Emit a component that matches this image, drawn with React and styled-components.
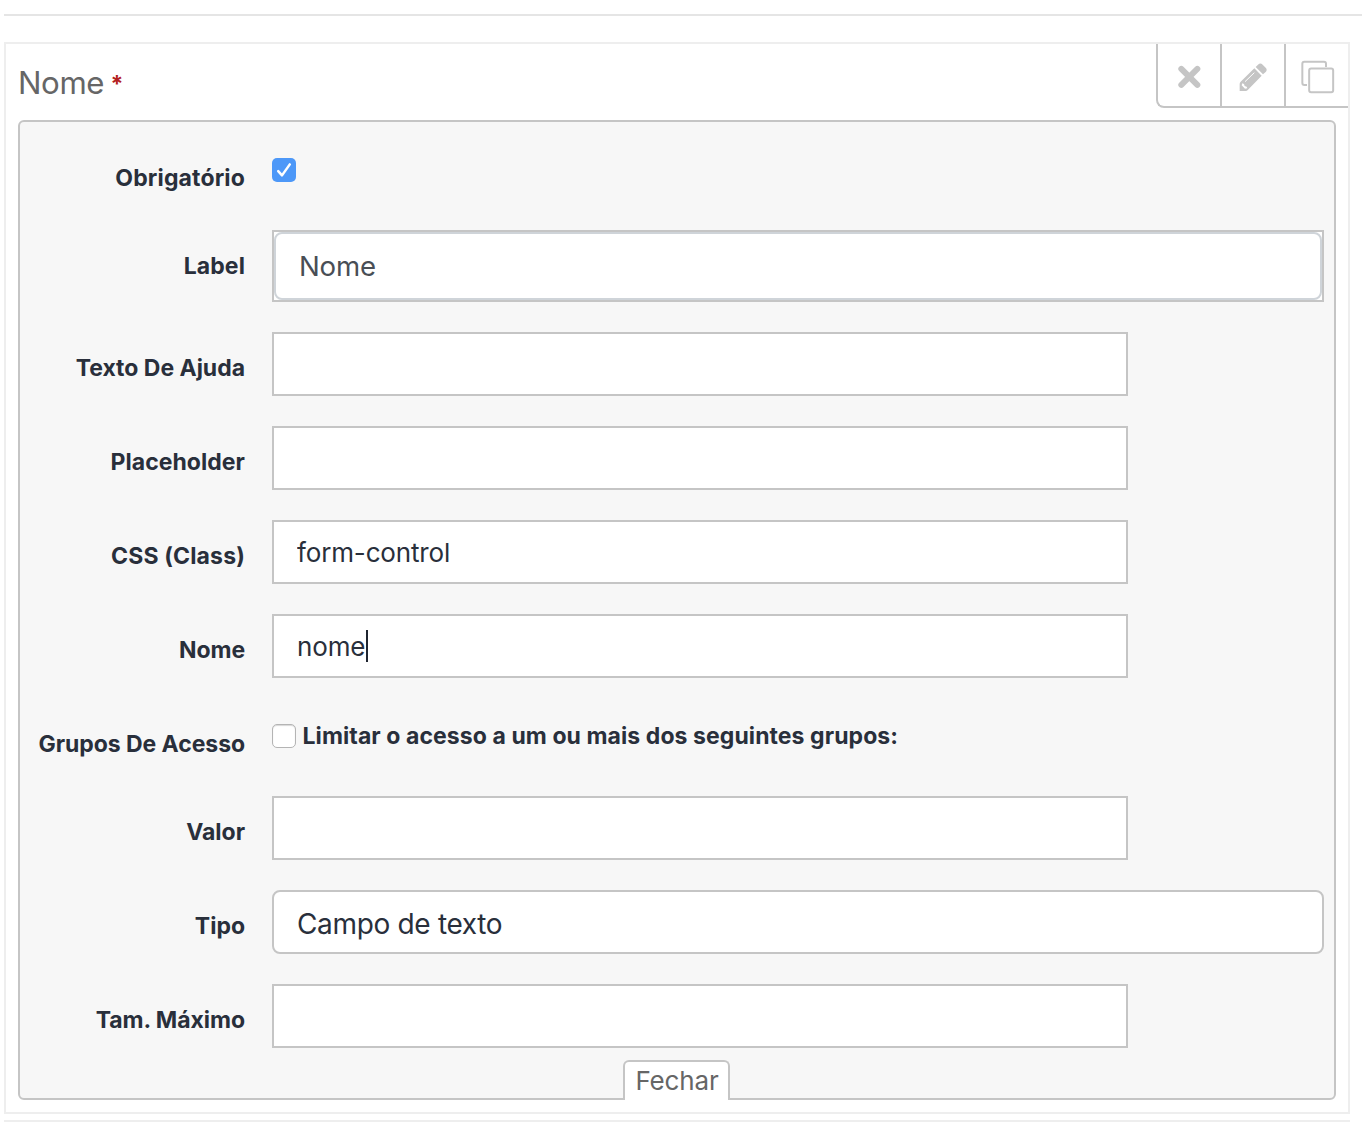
import React from "react";
import styled, { createGlobalStyle } from "styled-components";

const line = "#c5c5c5";

const GlobalStyle = createGlobalStyle`
  *, *::before, *::after { box-sizing: border-box; }
  body {
    margin: 0;
    background: #fff;
    color: #292b2c;
    font-family: Inter, "Liberation Sans", sans-serif;
    overflow: hidden;
  }
`;

const Page = styled.main`
  display: flex;
  flex-direction: column;
  height: 1122px;
  padding: 14px 0 0 4px;
`;

const Divider = styled.hr`
  flex: none;
  width: 100%;
  height: 2px;
  margin: 0 0 26px;
  border: 0;
  background: #e5e5e5;
`;

const FieldCard = styled.section`
  flex: none;
  display: flex;
  flex-direction: column;
  width: 1346px;
  height: 1072px;
  margin-bottom: 6px;
  padding: 0 12px;
  border: 2px solid #eee;
`;

const NextCard = styled.section`
  flex: none;
  width: 1346px;
  height: 2px;
  background: #eee;
`;

const CardHeader = styled.header`
  display: flex;
  justify-content: space-between;
  height: 76px;
  margin-right: -12px;
`;

const Title = styled.h1`
  display: flex;
  margin: 0;
  padding-top: 19px;
  color: #666;
  font-size: 31.2px;
  font-weight: 400;
  letter-spacing: -0.4px;
  line-height: 40px;
`;

const Required = styled.span`
  margin-left: 6.5px;
  color: #b32020;
  font-size: 23px;
  font-weight: 700;
  line-height: 42px;
`;

const Toolbar = styled.div`
  display: flex;
  height: 64px;
  border: solid ${line};
  border-width: 0 0 2px 2px;
  border-bottom-left-radius: 8px;
`;

const ToolButton = styled.button`
  display: grid;
  place-items: center;
  width: ${(p) => (p.$first ? 62 : 64)}px;
  height: 62px;
  padding: 0;
  border: 0;
  border-left: ${(p) => (p.$first ? "0" : `2px solid ${line}`)};
  background: none;
  color: ${line};

  svg { display: block; width: 40px; height: 40px; }
`;

const Panel = styled.form`
  display: flex;
  flex-direction: column;
  gap: 30px;
  height: 980px;
  padding: 20px 10px 0 0;
  border: 2px solid ${line};
  border-radius: 6px;
  background: #f7f7f7;
`;

const Row = styled.div`
  flex: none;
  display: grid;
  grid-template-columns: 225px 1052px;
  column-gap: 27px;
  height: ${(p) => p.$height || 64}px;
`;

const Label = styled.label`
  padding-top: 22px;
  color: #292f3b;
  font-size: 23px;
  font-weight: 700;
  line-height: 28px;
  letter-spacing: ${(p) => p.$tracking || 0}px;
  text-align: right;
  white-space: nowrap;
`;

const FieldBox = styled.div`
  position: relative;
  width: 856px;
  height: 64px;
`;

const TextInput = styled.input`
  display: block;
  width: 100%;
  height: 100%;
  padding: 0 23px;
  border: 2px solid ${line};
  border-radius: 0;
  outline: 0;
  background: #fff;
  color: #292f3b;
  font-family: inherit;
  font-size: 26px;
  letter-spacing: -0.15px;
`;

const Caret = styled.span`
  position: absolute;
  top: 16px;
  left: 94px;
  width: 2px;
  height: 32px;
  background: #1f2530;
`;

const EditableFrame = styled.div`
  height: 72px;
  border: 2px solid ${line};
  background: #fff;
`;

const Editable = styled.div`
  height: 68px;
  padding: 0 23px;
  border: 2px solid #cfd4d9;
  border-radius: 8px;
  color: #494e55;
  font-size: 27.6px;
  letter-spacing: -0.2px;
  line-height: 65px;
`;

const Select = styled.select`
  width: 100%;
  height: 64px;
  padding: 4px 23px 0;
  border: 2px solid ${line};
  border-radius: 8px;
  appearance: none;
  background: #fff;
  color: #292f3b;
  font-family: inherit;
  font-size: 28px;
  letter-spacing: -0.33px;
`;

const CheckLine = styled.div`
  display: flex;
  align-items: center;
  height: 24px;
  margin-top: 16px;
`;

const Checkbox = styled.span`
  flex: none;
  width: 24px;
  height: 24px;
  border: ${(p) => (p.$checked ? "0" : "1px solid #b4b4b4")};
  border-radius: 5px;
  background: ${(p) => (p.$checked ? "#4d98f8" : "#fff")};
  box-shadow: ${(p) => (p.$checked ? "none" : "inset 0 1px 1px #d8d8d8")};

  svg { display: block; width: 24px; height: 24px; }
`;

const CheckText = styled.span`
  margin-left: 6.5px;
  color: #292f3b;
  font-size: 23px;
  font-weight: 700;
  letter-spacing: 0.08px;
  line-height: 24px;
`;

const CloseTab = styled.button`
  align-self: center;
  flex: none;
  width: 107px;
  height: 40px;
  margin: -18px -9px 0 0;
  padding: 0 0 0 1px;
  border: 2px solid ${line};
  border-bottom: 0;
  border-radius: 6px 6px 0 0;
  background: #fff;
  color: #666;
  font-family: inherit;
  font-size: 26px;
  letter-spacing: -0.15px;
  line-height: 38px;
`;

const RemoveIcon = () => (
  <svg viewBox="81 165 120 120" aria-hidden="true">
    <path d="M118 206.500 L166 254.500 M166 206.500 L118 254.500" fill="none" stroke="currentColor" strokeWidth="18" strokeLinecap="round" />
  </svg>
);

const EditIcon = () => (
  <svg viewBox="273 165 120 120" aria-hidden="true">
    <path fill="currentColor" d="M348 194 Q355 187 362 194 L371 203 Q377 209 371 216 L363 223 L341 201 Z" />
    <path fill="currentColor" d="M337 205 L359 227 L318 269 Q315 273 311 273 L293 273 L293 252 Q293 248 296 245 Z" />
    <path fill="none" stroke="#fff" strokeWidth="3" d="M309 245 L337 218" />
    <path fill="#fff" d="M299 256 L301 250 L306 252 L308 258 L314 260 L316 265 L309 266 L304 261 Z" />
  </svg>
);

const CopyIcon = () => (
  <svg viewBox="465 165 120 120" aria-hidden="true">
    <g fill="none" stroke="currentColor" strokeWidth="6">
      <path d="M552 201 V191 Q552 185 546 185 H487 Q481 185 481 191 V249 Q481 255 487 255 H495" />
      <rect x="501.500" y="205.500" width="72" height="71" rx="6" />
    </g>
  </svg>
);

const CheckIcon = () => (
  <svg viewBox="0 0 24 24" aria-hidden="true">
    <path d="M6.200 13.200 L10 17.400 L17.800 6.400" fill="none" stroke="#fff" strokeWidth="2.500" strokeLinecap="round" strokeLinejoin="round" />
  </svg>
);

function TextField({ label, tracking, value = "", focused }) {
  return (
    <Row>
      <Label $tracking={tracking}>{label}</Label>
      <FieldBox>
        <TextInput aria-label={label} defaultValue={value} />
        {focused && <Caret />}
      </FieldBox>
    </Row>
  );
}

export default function App() {
  return (
    <>
      <GlobalStyle />
      <Page>
        <Divider />
        <FieldCard>
          <CardHeader>
            <Title>
              Nome<Required>*</Required>
            </Title>
            <Toolbar>
              <ToolButton $first type="button" aria-label="Remover"><RemoveIcon /></ToolButton>
              <ToolButton type="button" aria-label="Editar"><EditIcon /></ToolButton>
              <ToolButton type="button" aria-label="Copiar"><CopyIcon /></ToolButton>
            </Toolbar>
          </CardHeader>
          <Panel>
            <Row $height={58}>
              <Label $tracking={0.15}>Obrigatório</Label>
              <CheckLine>
                <Checkbox $checked><CheckIcon /></Checkbox>
              </CheckLine>
            </Row>
            <Row $height={72}>
              <Label $tracking={0.1}>Label</Label>
              <EditableFrame><Editable>Nome</Editable></EditableFrame>
            </Row>
            <TextField label="Texto De Ajuda" tracking={-0.02} />
            <TextField label="Placeholder" tracking={0.05} />
            <TextField label="CSS (Class)" tracking={0.15} value="form-control" />
            <TextField label="Nome" tracking={-0.1} value="nome" focused />
            <Row $height={58}>
              <Label $tracking={-0.06}>Grupos De Acesso</Label>
              <CheckLine>
                <Checkbox />
                <CheckText>Limitar o acesso a um ou mais dos seguintes grupos:</CheckText>
              </CheckLine>
            </Row>
            <TextField label="Valor" />
            <Row>
              <Label>Tipo</Label>
              <Select aria-label="Tipo" defaultValue="text">
                <option value="text">Campo de texto</option>
              </Select>
            </Row>
            <TextField label="Tam. Máximo" tracking={-0.05} />
            <CloseTab type="button">Fechar</CloseTab>
          </Panel>
        </FieldCard>
        <NextCard />
      </Page>
    </>
  );
}
